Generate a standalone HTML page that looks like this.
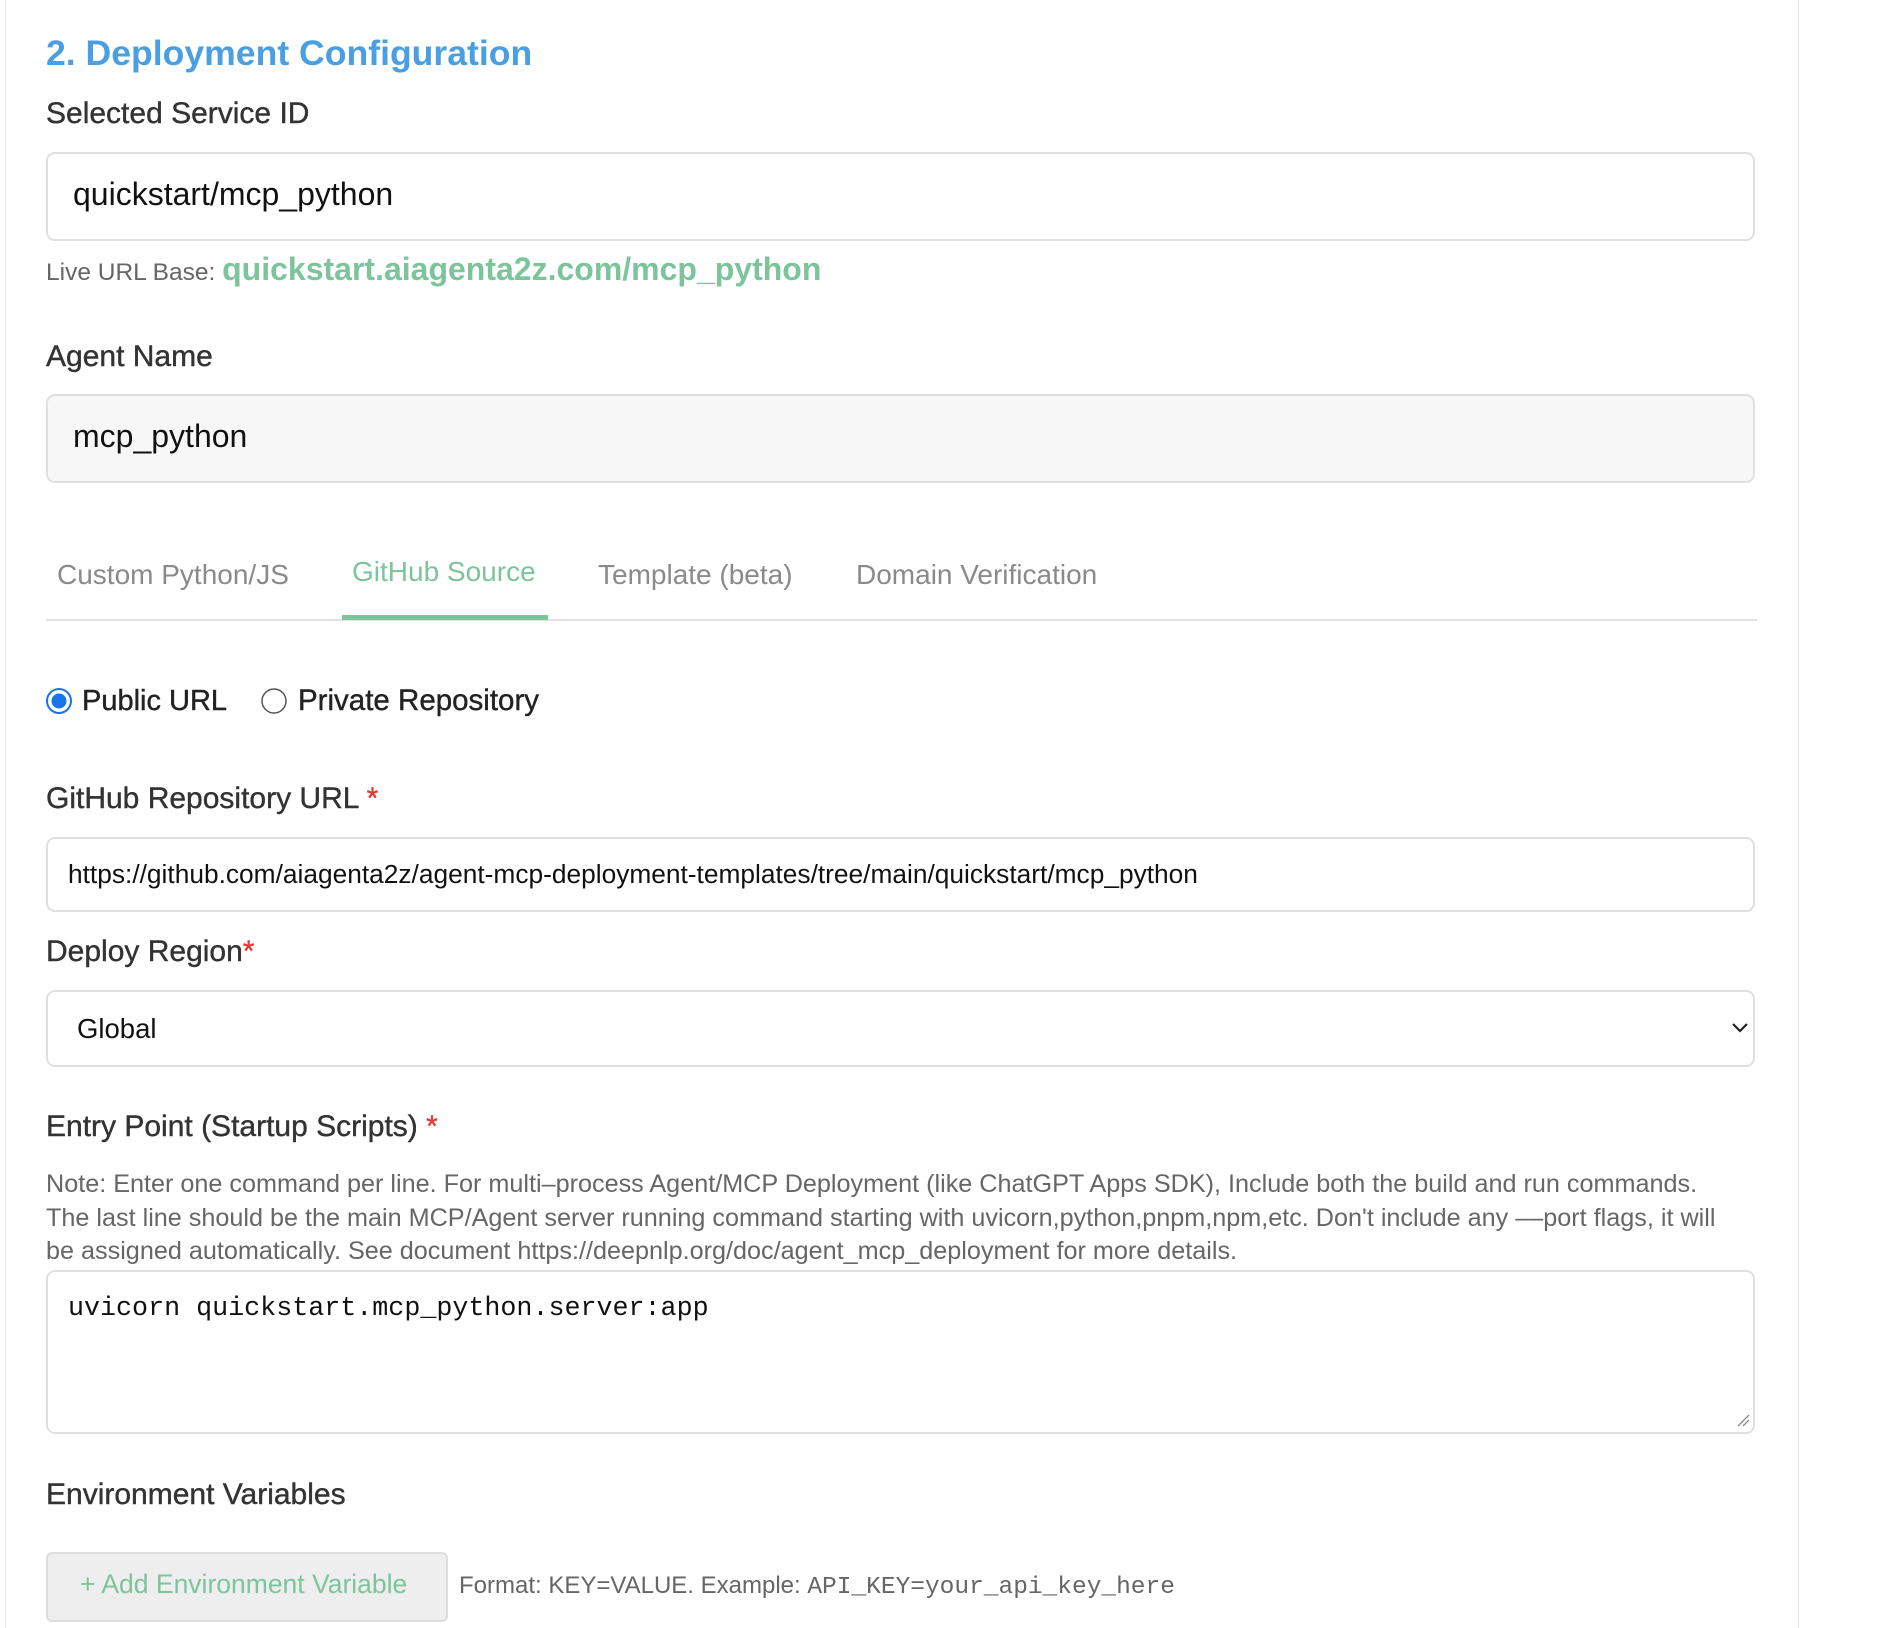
<!DOCTYPE html>
<html><head><meta charset="utf-8"><style>
body{margin:0;width:1896px;height:1616px;overflow:hidden;background:#fff;font-family:"Liberation Sans",Arial,sans-serif;position:relative}
.a{position:absolute;white-space:nowrap}
.panel{position:absolute;left:5px;top:-2px;width:1792px;height:1630px;border-left:1px solid #e8e8e8;border-right:1px solid #e8e8e8}
.lbl{font-size:30px;color:#333;-webkit-text-stroke:0.4px #333}
.inp{position:absolute;left:46px;width:1709px;border:2px solid #e0e0e0;border-radius:9px;box-sizing:border-box}
.req{color:#e53935;-webkit-text-stroke:0.4px #e53935}
</style></head><body>
<div class="panel"></div>
<div class="a" style="left:46px;top:33px;font-size:35.6px;font-weight:bold;color:#4a9fe3">2. Deployment Configuration</div>
<div class="a lbl" style="left:46px;top:97px">Selected Service ID</div>
<div class="inp" style="top:152px;height:89px;background:#fff"></div>
<div class="a" style="left:73px;top:176px;font-size:32px;color:#111">quickstart/mcp_python</div>
<div class="a" style="left:46px;top:251px;font-size:24.5px;color:#666">Live URL Base: <span style="font-size:32px;font-weight:bold;color:#7cc49b">quickstart.aiagenta2z.com/mcp_python</span></div>
<div class="a lbl" style="left:46px;top:340px">Agent Name</div>
<div class="inp" style="top:394px;height:89px;background:#f7f7f7"></div>
<div class="a" style="left:73px;top:418px;font-size:32px;color:#111">mcp_python</div>
<div class="a" style="left:57px;top:559px;font-size:28px;color:#8a8a8a">Custom Python/JS</div>
<div class="a" style="left:352px;top:556px;font-size:28px;color:#7cc49b">GitHub Source</div>
<div class="a" style="left:598px;top:559px;font-size:28px;color:#8a8a8a">Template (beta)</div>
<div class="a" style="left:856px;top:559px;font-size:28px;color:#8a8a8a">Domain Verification</div>
<div class="a" style="left:46px;top:619px;width:1711px;height:2px;background:#e2e2e2"></div>
<div class="a" style="left:342px;top:615px;width:206px;height:5px;background:#7cc49b"></div>
<svg class="a" style="left:46px;top:688px" width="28" height="28"><circle cx="13" cy="13" r="12" fill="#fff" stroke="#1a73e8" stroke-width="2"/><circle cx="13" cy="13" r="7.5" fill="#1a73e8"/></svg>
<div class="a" style="left:82px;top:685px;font-size:29px;color:#222;-webkit-text-stroke:0.4px #222">Public URL</div>
<svg class="a" style="left:261px;top:688px" width="28" height="28"><circle cx="13" cy="13" r="12" fill="#fff" stroke="#555" stroke-width="1.5"/></svg>
<div class="a" style="left:298px;top:684px;font-size:29.5px;color:#222;-webkit-text-stroke:0.4px #222">Private Repository</div>
<div class="a lbl" style="left:46px;top:782px">GitHub Repository URL <span class="req">*</span></div>
<div class="inp" style="top:837px;height:75px;background:#fff"></div>
<div class="a" style="left:68px;top:859px;font-size:26.3px;color:#111">https://github.com/aiagenta2z/agent-mcp-deployment-templates/tree/main/quickstart/mcp_python</div>
<div class="a lbl" style="left:46px;top:935px">Deploy Region<span class="req">*</span></div>
<div class="inp" style="top:990px;height:77px;background:#fff"></div>
<div class="a" style="left:77px;top:1013px;font-size:27.5px;color:#111">Global</div>
<svg class="a" style="left:1731px;top:1021px" width="18" height="14"><path d="M2 3 L9 10 L16 3" fill="none" stroke="#222" stroke-width="2.2"/></svg>
<div class="a lbl" style="left:46px;top:1110px">Entry Point (Startup Scripts) <span class="req">*</span></div>
<div class="a" style="left:46px;top:1168px;font-size:25.2px;line-height:33.5px;color:#666;white-space:nowrap">Note: Enter one command per line. For multi–process Agent/MCP Deployment (like ChatGPT Apps SDK), Include both the build and run commands.<br>The last line should be the main MCP/Agent server running command starting with uvicorn,python,pnpm,npm,etc. Don't include any ––port flags, it will<br>be assigned automatically. See document https://deepnlp.org/doc/agent_mcp_deployment for more details.</div>
<div class="inp" style="top:1270px;height:164px;background:#fff"></div>
<div class="a" style="left:68px;top:1294px;font-size:26.7px;font-family:'Liberation Mono','DejaVu Sans Mono',monospace;color:#111">uvicorn quickstart.mcp_python.server:app</div>
<svg class="a" style="left:1736px;top:1413px" width="14" height="14"><path d="M2 13 L13 2 M7 13 L13 7" stroke="#888" stroke-width="1.3"/></svg>
<div class="a lbl" style="left:46px;top:1478px">Environment Variables</div>
<div class="a" style="left:46px;top:1552px;width:402px;height:70px;box-sizing:border-box;background:#eee;border:2px solid #ddd;border-radius:6px"></div>
<div class="a" style="left:80px;top:1569px;font-size:26.5px;color:#7cc49b">+ Add Environment Variable</div>
<div class="a" style="left:459px;top:1572px;font-size:24px;color:#666">Format: KEY=VALUE. Example: <span style="font-family:'Liberation Mono','DejaVu Sans Mono',monospace;font-size:24.5px">API_KEY=your_api_key_here</span></div>
</body></html>
